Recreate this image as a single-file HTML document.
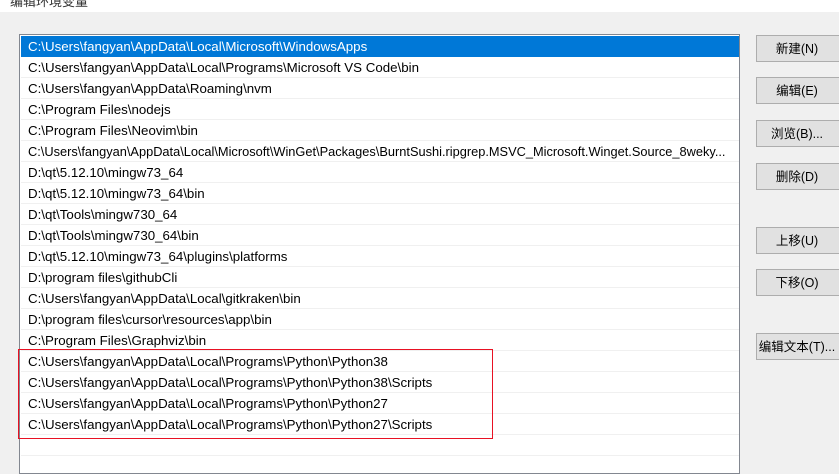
<!DOCTYPE html>
<html><head><meta charset="utf-8"><style>
body{margin:0;width:839px;height:465px;overflow:hidden;background:#f0f0f0;font-family:"Liberation Sans","Noto Sans CJK SC",sans-serif;font-size:13.3px;color:#000;position:relative}
.top{position:absolute;left:0;top:0;width:839px;height:12px;background:#fff}
.title{position:absolute;left:10px;top:-9px;font-size:13px;color:#333}
.list{position:absolute;left:19px;top:34px;width:721px;height:440px;background:#fff;border:1px solid #828790;box-sizing:border-box}
.row{position:absolute;left:1px;width:718px;height:21px;line-height:22px;border-bottom:1px solid #f0f0f0;box-sizing:border-box;padding-left:7px;white-space:nowrap;overflow:hidden}
.sel{background:#0078d7;color:#fff;border-bottom:none}
.btn{position:absolute;left:756px;width:90px;height:27px;background:#e1e1e1;border:1px solid #adadad;box-sizing:border-box;text-align:center;line-height:26px;padding-right:8px;font-size:12.5px}
.red{position:absolute;left:18px;top:349px;width:475px;height:90px;border:1px solid #e81123;box-sizing:border-box}
</style></head><body>
<div class="top"><span class="title">编辑环境变量</span></div>
<div class="list">
<div class="row sel" style="top:1px">C:\Users\fangyan\AppData\Local\Microsoft\WindowsApps</div>
<div class="row" style="top:22px">C:\Users\fangyan\AppData\Local\Programs\Microsoft VS Code\bin</div>
<div class="row" style="top:43px">C:\Users\fangyan\AppData\Roaming\nvm</div>
<div class="row" style="top:64px">C:\Program Files\nodejs</div>
<div class="row" style="top:85px">C:\Program Files\Neovim\bin</div>
<div class="row" style="top:106px;font-size:12.8px">C:\Users\fangyan\AppData\Local\Microsoft\WinGet\Packages\BurntSushi.ripgrep.MSVC_Microsoft.Winget.Source_8weky...</div>
<div class="row" style="top:127px">D:\qt\5.12.10\mingw73_64</div>
<div class="row" style="top:148px">D:\qt\5.12.10\mingw73_64\bin</div>
<div class="row" style="top:169px">D:\qt\Tools\mingw730_64</div>
<div class="row" style="top:190px">D:\qt\Tools\mingw730_64\bin</div>
<div class="row" style="top:211px">D:\qt\5.12.10\mingw73_64\plugins\platforms</div>
<div class="row" style="top:232px">D:\program files\githubCli</div>
<div class="row" style="top:253px">C:\Users\fangyan\AppData\Local\gitkraken\bin</div>
<div class="row" style="top:274px">D:\program files\cursor\resources\app\bin</div>
<div class="row" style="top:295px">C:\Program Files\Graphviz\bin</div>
<div class="row" style="top:316px">C:\Users\fangyan\AppData\Local\Programs\Python\Python38</div>
<div class="row" style="top:337px">C:\Users\fangyan\AppData\Local\Programs\Python\Python38\Scripts</div>
<div class="row" style="top:358px">C:\Users\fangyan\AppData\Local\Programs\Python\Python27</div>
<div class="row" style="top:379px">C:\Users\fangyan\AppData\Local\Programs\Python\Python27\Scripts</div>
<div class="row" style="top:400px"></div>
</div>
<div class="red"></div>
<div class="btn" style="top:35px">新建(N)</div>
<div class="btn" style="top:77px">编辑(E)</div>
<div class="btn" style="top:120px">浏览(B)...</div>
<div class="btn" style="top:163px">删除(D)</div>
<div class="btn" style="top:227px">上移(U)</div>
<div class="btn" style="top:269px">下移(O)</div>
<div class="btn" style="top:333px">编辑文本(T)...</div>
</body></html>
